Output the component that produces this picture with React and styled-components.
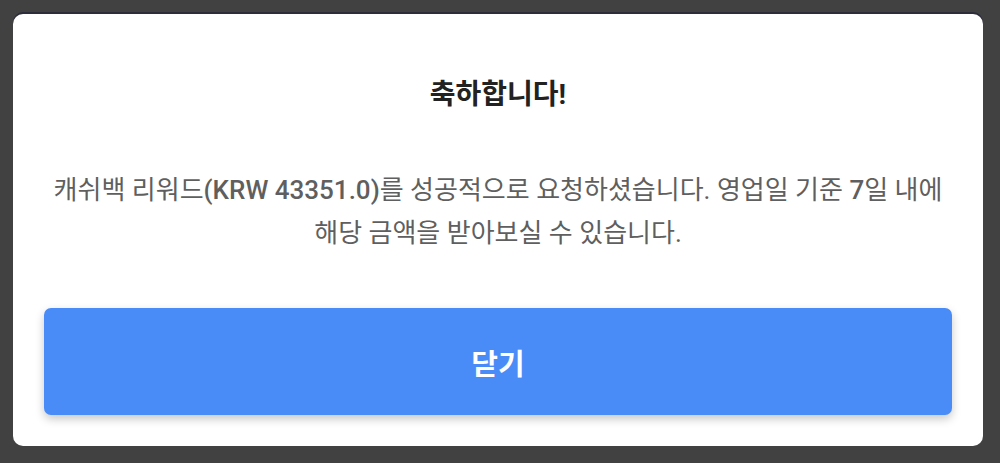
import React from 'react';
import styled, { createGlobalStyle } from 'styled-components';

const GlobalStyle = createGlobalStyle`
  html, body {
    margin: 0;
    padding: 0;
    background: #414141;
  }
  body {
    font-family: Roboto, "Noto Sans CJK KR", sans-serif;
  }
`

const App = () => {
    return (
        <>
        <GlobalStyle />
        <Screen>
          <Dialog>
            <Title>축하합니다!</Title>
            <Message>
              캐쉬백 리워드<Strong>(KRW 43351.0)</Strong>를 성공적으로 요청하셨습니다. 영업일 기준 <Strong>7</Strong>일 내에
              <br />
              해당 금액을 받아보실 수 있습니다.
            </Message>
            <CloseBtn>닫기</CloseBtn>
          </Dialog>
        </Screen>
        </>
    );
};

export default App;

const Screen = styled.div`
  width: 1000px;
  height: 463px;
  box-sizing: border-box;
  padding: 14px 17px 17px 13px;
  background: #414141;
`
const Dialog = styled.div`
  height: 100%;
  box-sizing: border-box;
  background: #ffffff;
  border-radius: 10px;
  box-shadow: 0 -2px 0 #2c2d3a;
  padding: 61px 31px 31px 31px;
  display: flex;
  flex-direction: column;
  align-items: center;
`
const Title = styled.h2`
  margin: 0;
  font-size: 28px;
  line-height: 40px;
  font-weight: 700;
  color: #222222;
`
const Message = styled.p`
  margin: 54px 0 0 0;
  font-size: 26px;
  line-height: 43px;
  font-weight: 400;
  color: #5f5f5f;
  text-align: center;
  white-space: nowrap;
`
const Strong = styled.span`
  font-weight: 500;
`
const CloseBtn = styled.button`
  margin-top: 53px;
  width: 100%;
  height: 107px;
  border: 0;
  border-radius: 7px;
  background: #4a8cf7;
  color: #ffffff;
  font-family: Roboto, "Noto Sans CJK KR", sans-serif;
  font-size: 29px;
  font-weight: 700;
  box-shadow: 0 4px 10px rgba(0, 0, 0, 0.22);
  cursor: pointer;
`
